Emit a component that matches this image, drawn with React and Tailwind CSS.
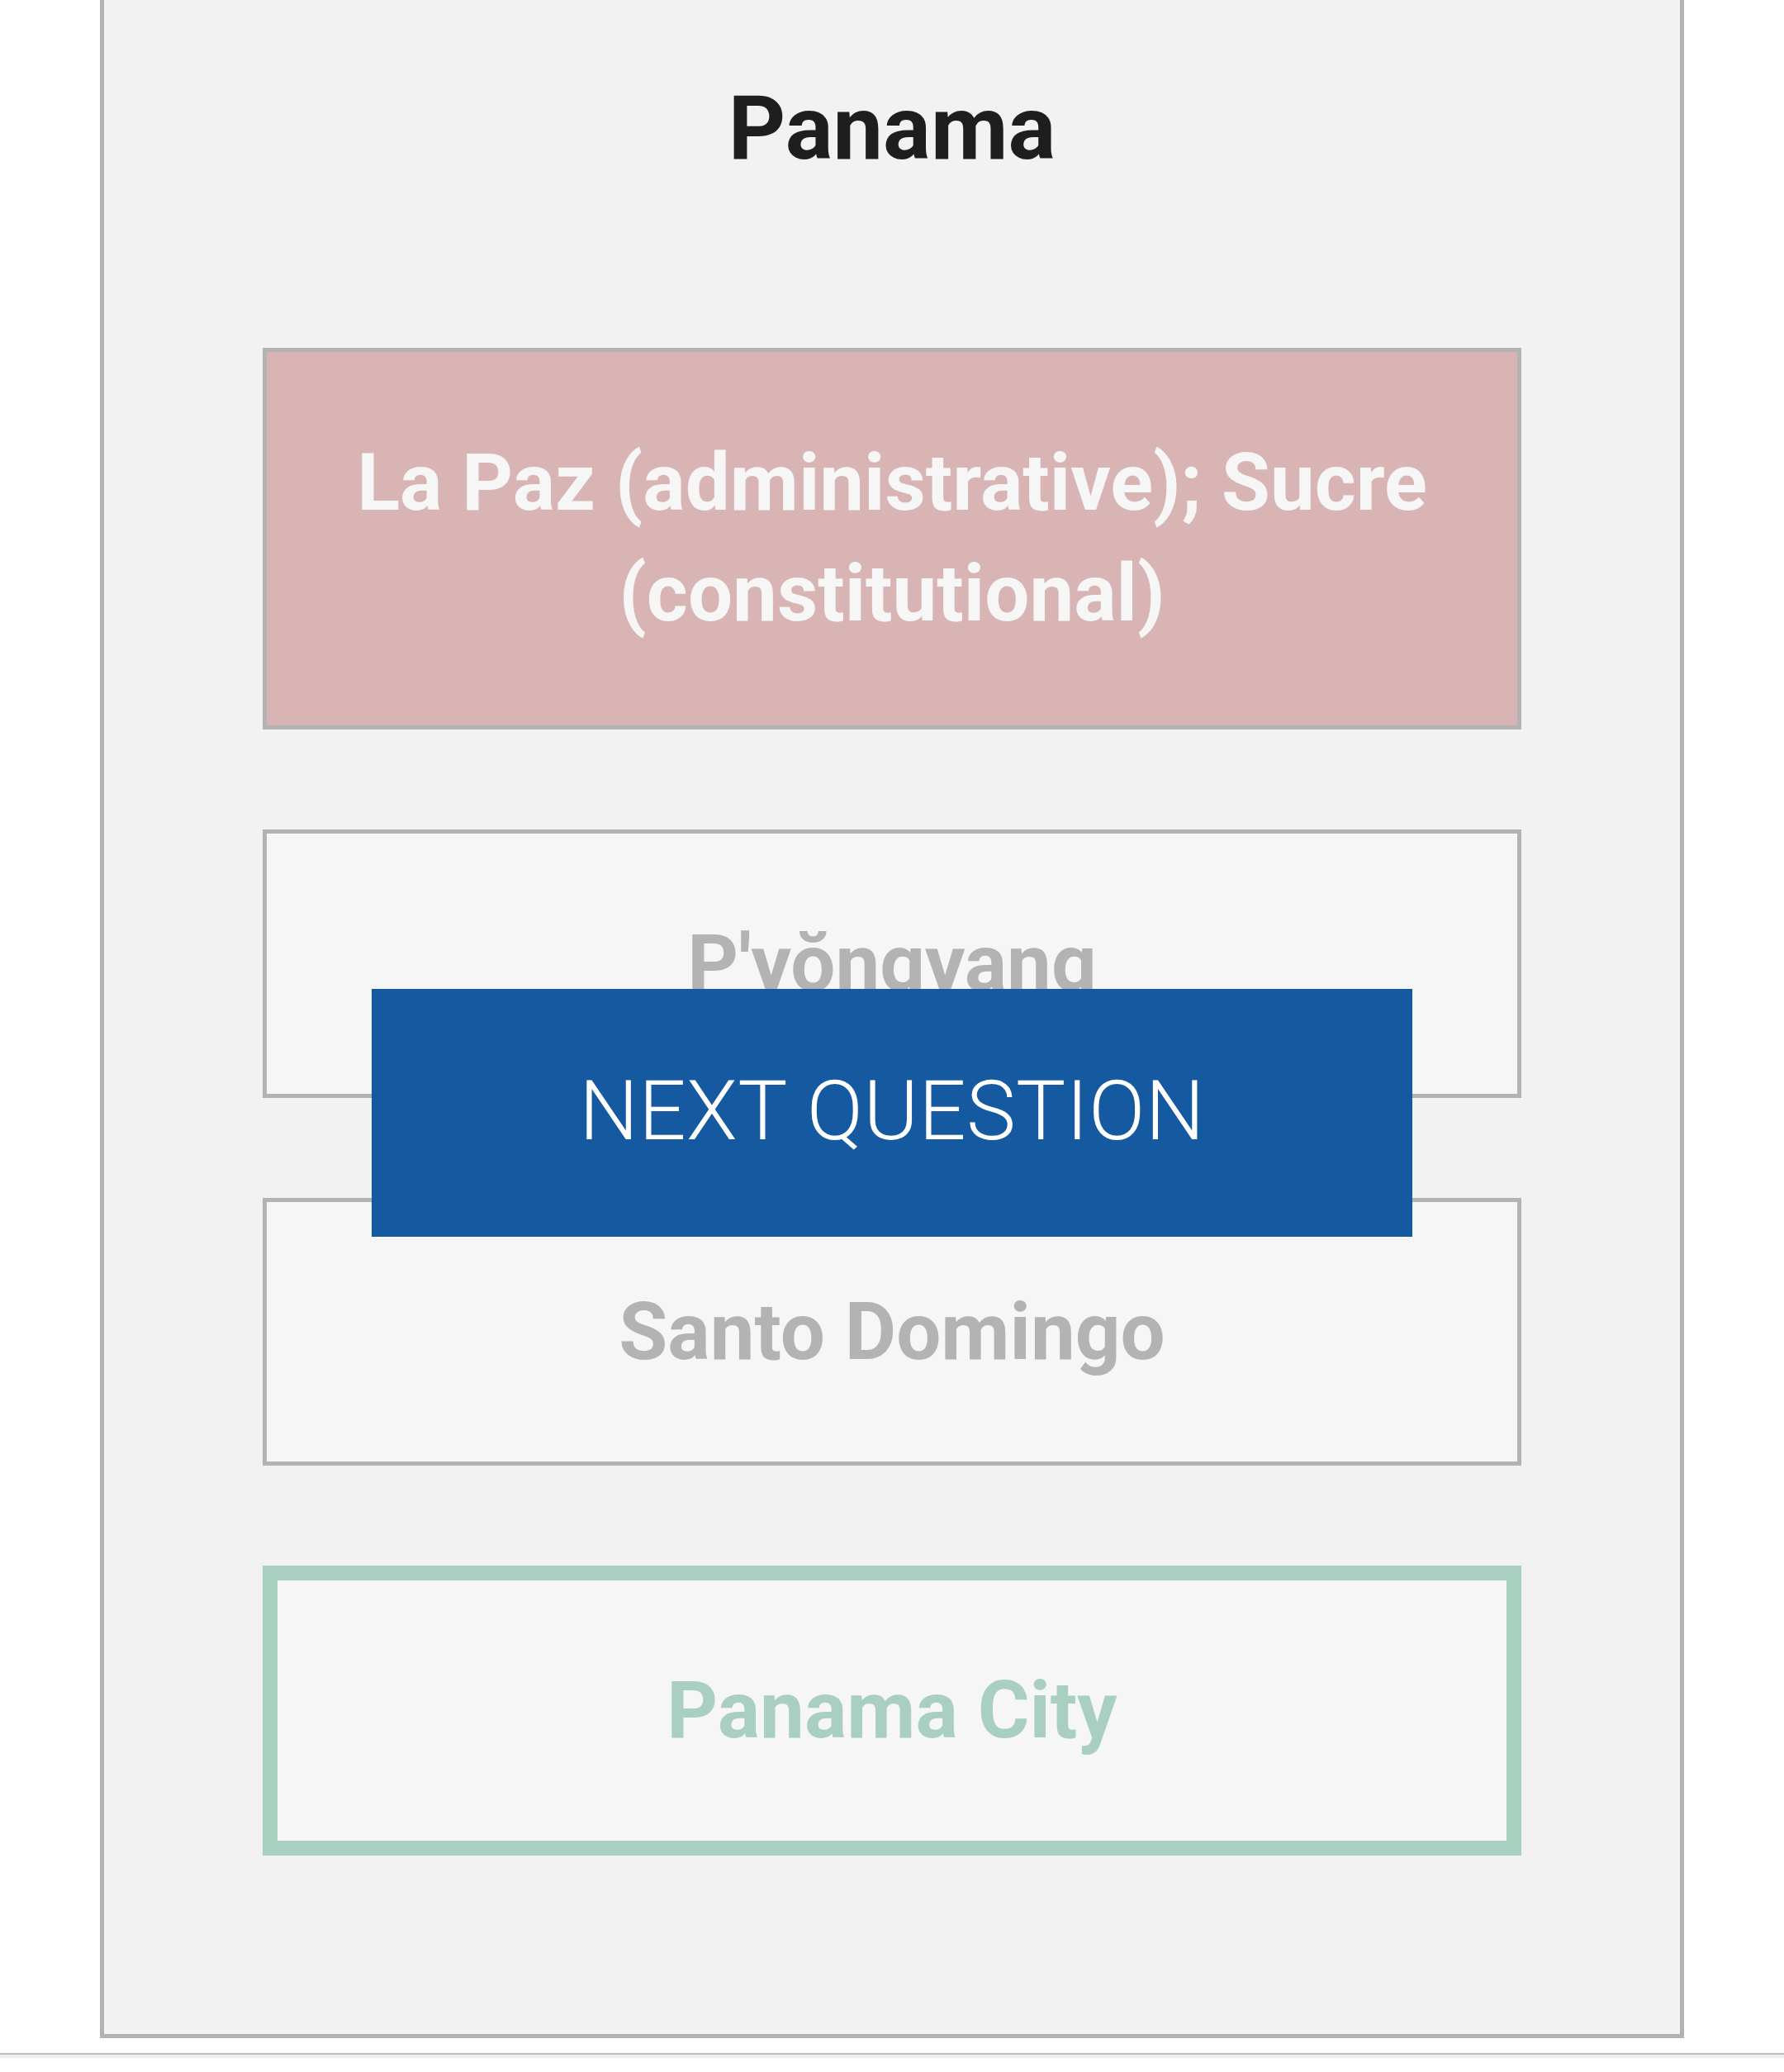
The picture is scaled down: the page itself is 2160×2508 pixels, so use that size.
const answers = [
  { text: 'La Paz (administrative); Sucre (constitutional)', state: 'wrong' },
  { text: "P'yŏngyang", state: 'idle' },
  { text: 'Santo Domingo', state: 'idle' },
  { text: 'Panama City', state: 'right' },
]

const boxStyle = {
  wrong: 'bg-[#d8b4b4] text-[#f6f6f6] border-[5px] border-[#b3b3b3] pt-[91px] pb-[93px]',
  idle: 'bg-[#f6f6f6] text-[#b3b3b3] border-[5px] border-[#b3b3b3] py-[90px]',
  right: 'bg-[#f6f6f6] text-[#a9cfc0] border-[18px] border-[#a9cfc0] py-[90px]',
}

export default function App() {
  return (
    <div className="w-[2160px] h-[2508px] bg-white overflow-hidden" style={{ fontFamily: 'Roboto, "Liberation Sans", sans-serif' }}>
      <div className="relative ml-[121px] w-[1918px] bg-[#f2f2f2] border-x-[5px] border-b-[5px] border-[#b3b3b3] px-[192px] pt-[91px] pb-[216px]">
        <h1 className="text-center text-[108px] font-bold leading-[1.2] text-[#1e1e1e] mb-[200px]">Panama</h1>

        <div className="flex flex-col gap-[121px]">
          {answers.map((a) => (
            <div key={a.text} className={`px-[60px] text-center text-[96px] font-bold leading-[1.4] ${boxStyle[a.state]}`}>
              {a.text}
            </div>
          ))}
        </div>

        <button className="absolute left-[324px] top-[1197px] w-[1260px] h-[300px] bg-[#1559a0] text-white text-[101px] font-light tracking-[0.3px] pb-[4px]">
          NEXT QUESTION
        </button>
      </div>

      <div className="mt-[18px] border-t-2 border-[#bcbcbc] h-[6px] bg-[#ededed]"></div>
    </div>
  )
}
